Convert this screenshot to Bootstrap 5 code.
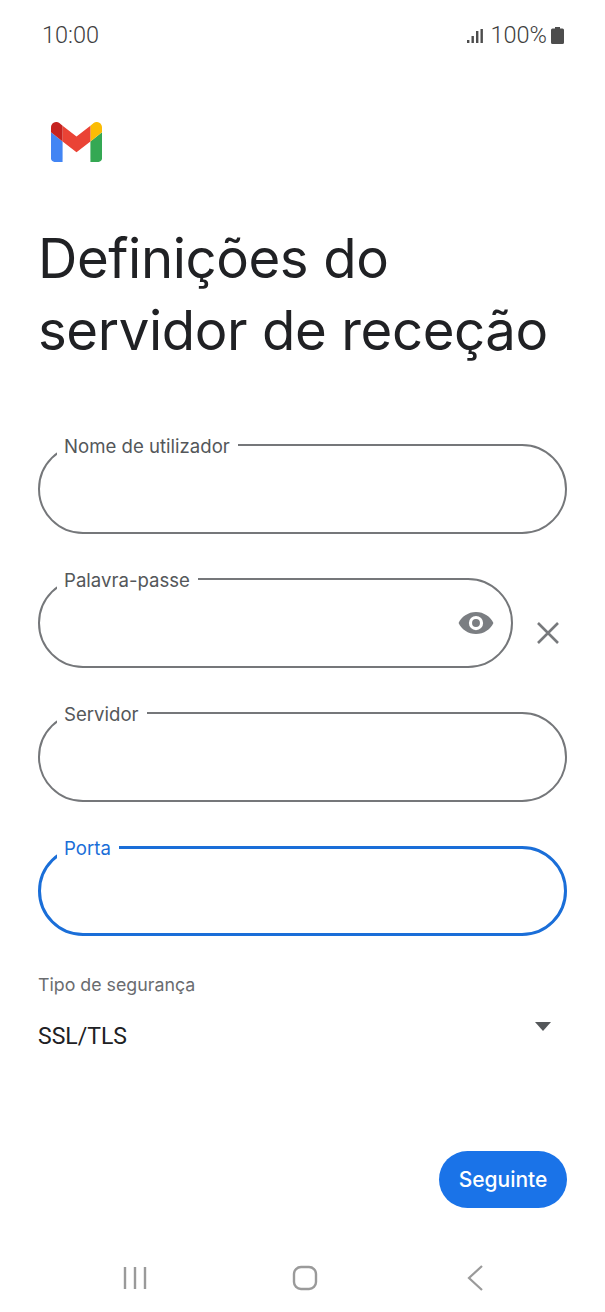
<!DOCTYPE html>
<html lang="pt">
<head>
    <meta charset="UTF-8">
    <meta name="viewport" content="width=device-width, initial-scale=1.0">
    <title>Definições do servidor de receção</title>
    <link href="https://cdn.jsdelivr.net/npm/bootstrap@5.3.0/dist/css/bootstrap.min.css" rel="stylesheet">
    <style>
        body { background: #fff; font-family: "Inter", "Liberation Sans", sans-serif; }
        .screen { width: 605px; height: 1312px; overflow: hidden; }
        .status-row { height: 70px; padding: 1px 41px 0 42px; font-family: "Roboto", sans-serif; font-size: 23.5px; font-weight: 300; color: #3f3f3f; }
        .logo-wrap { padding: 52px 0 0 51px; height: 92px; }
        .page-title { font-family: "Inter", sans-serif; font-size: 54.5px; line-height: 72px; font-weight: 400; letter-spacing: -.4px; color: #202124; margin: 60px 0 0 38px; white-space: nowrap; }
        .fields { margin: 78px 38px 0; gap: 44px; }
        .field-wrap { height: 90px; }
        .field-input, .field-input:focus { height: 90px; border-radius: 45px; border: 2px solid #75777a; box-shadow: none; background: #fff; }
        .field-label { top: -9px; left: 19px; padding: 0 8px 0 7px; background: #fff; font-size: 18.6px; line-height: 22px; color: #54575a; }
        .field-active .field-input { border: 3px solid #1a6ed8; }
        .field-active .field-label { color: #1a6ed8; }
        .eye-icon { top: 26px; right: 18px; }
        .clear-btn { width: 54px; padding-left: 23px; padding-top: 20px; }
        .security { margin: 37px 38px 0; }
        .security-label { font-size: 17.8px; line-height: 24px; color: #6a6c6f; }
        .security-value { font-family: "Roboto", sans-serif; font-size: 23px; line-height: 28px; color: #202124; margin-top: 25px; padding-right: 16px; }
        .caret-icon { margin-bottom: 20px; }
        .next-row { margin: 100px 38px 0; }
        .next-btn { width: 128px; height: 57px; background: #1a73e8; border: 0; color: #fff; font-size: 21px; font-weight: 500; padding: 0; font-family: "Inter", sans-serif; }
        .nav-row { margin-top: 57px; padding-left: 123px; }
        .nav-home { margin: 0 149px 0 145px; }
    </style>
</head>
<body>
    <div class="screen d-flex flex-column">
        <!-- status bar -->
        <div class="status-row d-flex align-items-center justify-content-between">
            <span>10:00</span>
            <span class="d-flex align-items-center">
                <svg width="16" height="14" viewBox="0 0 16 14" class="me-2" fill="#4d4d4d">
                    <rect x="0" y="11" width="2.400" height="3"/>
                    <rect x="4.500" y="7" width="2.400" height="7"/>
                    <rect x="9" y="2" width="2.400" height="12"/>
                    <rect x="13.500" y="0" width="2.400" height="14"/>
                </svg>
                <span>100%</span>
                <svg width="13" height="17" viewBox="0 0 13 17" class="ms-1" fill="#4d4d4d">
                    <path d="M4 0h5v1.500h2.500a1.500 1.500 0 0 1 1.500 1.500v12.500a1.500 1.500 0 0 1-1.500 1.500h-10A1.500 1.500 0 0 1 0 15.500V3a1.500 1.500 0 0 1 1.500-1.500H4z"/>
                </svg>
            </span>
        </div>

        <div class="logo-wrap">
            <svg width="51" height="40" viewBox="52 42 88 66" preserveAspectRatio="none">
                <path fill="#4285f4" d="M58 108h14V74L52 59v43c0 3.320 2.690 6 6 6"/>
                <path fill="#34a853" d="M120 108h14c3.320 0 6-2.690 6-6V59l-20 15"/>
                <path fill="#fbbc04" d="M120 48v26l20-15v-8c0-7.420-8.470-11.650-14.400-7.200"/>
                <path fill="#ea4335" d="M72 74V48l24 18 24-18v26L96 92"/>
                <path fill="#c5221f" d="M52 51v8l20 15V48l-5.600-4.200c-5.940-4.450-14.400-.220-14.400 7.200"/>
            </svg>
        </div>

        <h1 class="page-title">Definições do<br>servidor de receção</h1>

        <!-- form fields -->
        <form class="fields d-flex flex-column">
            <div class="field-wrap position-relative">
                <label class="field-label position-absolute">Nome de utilizador</label>
                <input type="text" class="form-control field-input">
            </div>
            <div class="d-flex">
                <div class="field-wrap position-relative flex-grow-1">
                    <label class="field-label position-absolute">Palavra-passe</label>
                    <input type="password" class="form-control field-input">
                    <svg class="eye-icon position-absolute" width="38" height="38" viewBox="0 0 24 24" fill="#7b7e82">
                        <path d="M12 5C7 5 2.700 8.100 1 12c1.700 3.900 6 7 11 7s9.300-3.100 11-7c-1.700-3.900-6-7-11-7zm0 11.500a4.500 4.500 0 1 1 0-9 4.500 4.500 0 0 1 0 9zm0-7a2.500 2.500 0 1 0 0 5 2.500 2.500 0 0 0 0-5z"/>
                    </svg>
                </div>
                <div class="clear-btn d-flex align-items-center">
                    <svg width="24" height="24" viewBox="0 0 24 24" stroke="#77797c" stroke-width="2.600" fill="none">
                        <path d="M2 2l20 20M22 2L2 22"/>
                    </svg>
                </div>
            </div>
            <div class="field-wrap position-relative">
                <label class="field-label position-absolute">Servidor</label>
                <input type="text" class="form-control field-input">
            </div>
            <div class="field-wrap field-active position-relative">
                <label class="field-label position-absolute">Porta</label>
                <input type="text" class="form-control field-input">
            </div>
        </form>

        <div class="security">
            <div class="security-label">Tipo de segurança</div>
            <div class="security-value d-flex align-items-center justify-content-between">
                <span>SSL/TLS</span>
                <svg class="caret-icon" width="16" height="9" viewBox="0 0 16 9" fill="#54575a"><path d="M0 0h16L8 9z"/></svg>
            </div>
        </div>

        <div class="next-row d-flex justify-content-end">
            <button type="button" class="btn next-btn rounded-pill">Seguinte</button>
        </div>

        <!-- android nav -->
        <div class="nav-row d-flex align-items-center">
            <svg width="24" height="24" viewBox="0 0 24 24" stroke="#9a9a9a" stroke-width="2.400" fill="none">
                <path d="M2 1v22M12 1v22M22 1v22"/>
            </svg>
            <svg class="nav-home" width="26" height="26" viewBox="0 0 26 26" stroke="#9a9a9a" stroke-width="2.400" fill="none">
                <rect x="2" y="2" width="22" height="22" rx="7"/>
            </svg>
            <svg width="16" height="26" viewBox="0 0 16 26" stroke="#9a9a9a" stroke-width="2.200" fill="none">
                <path d="M15 1L2 13l13 12"/>
            </svg>
        </div>
    </div>
    <script src="https://cdn.jsdelivr.net/npm/bootstrap@5.3.0/dist/js/bootstrap.bundle.min.js"></script>
</body>
</html>
